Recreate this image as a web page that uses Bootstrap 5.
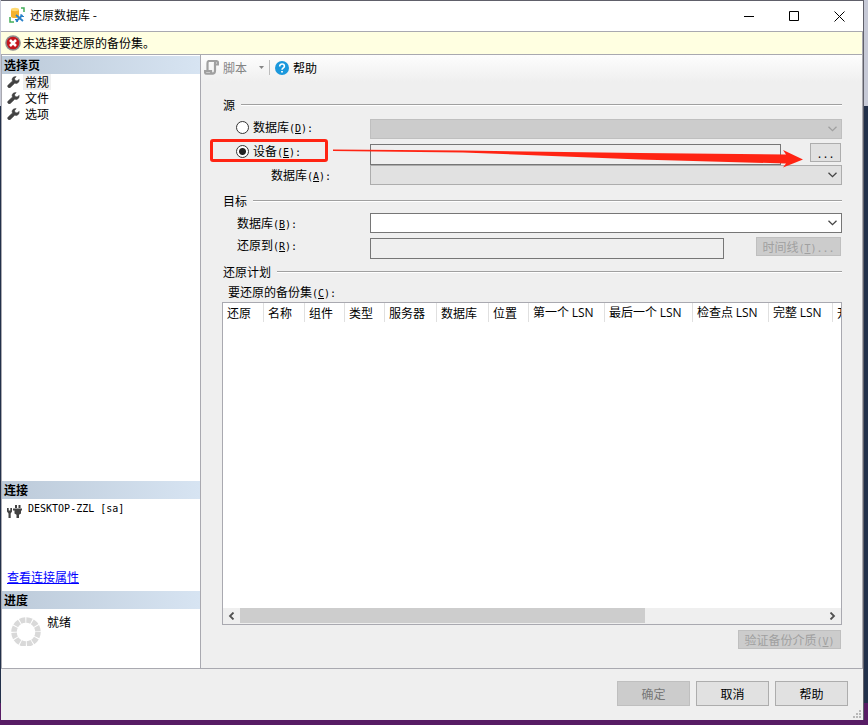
<!DOCTYPE html>
<html lang="zh-CN">
<head>
<meta charset="utf-8">
<meta name="viewport" content="width=device-width, initial-scale=1">
<title>还原数据库</title>
<link href="https://cdn.jsdelivr.net/npm/bootstrap@5.3.0/dist/css/bootstrap.min.css" rel="stylesheet">
<style>
  body { font: 12px/16px "Noto Sans CJK SC", sans-serif; color: #000; background: linear-gradient(#c6c9d6 0 106px, #22304a 106px calc(100% - 22px), #571c64 calc(100% - 22px)); min-height: 100vh; padding: 0 4px 5px 1px; }
  .ascii { font-family: "DejaVu Sans Mono", monospace; font-size: 10px; line-height: 10px; }
  .lsn { font-family: "Open Sans", sans-serif; }
  .window { background: #efefef; border-top: 1px solid #60606a; border-right: 1px solid #60606a; }
  .titlebar { height: 30px; padding: 0 1px 2px 8px; gap: 5px; }
  .caption-btn { width: 45px; height: 28px; border: 0; background: none; padding: 0; }
  .notice { height: 24px; background: #ffffe1; border: 1px solid #a9a9b0; border-left: 0; padding-left: 4px; gap: 2px; }
  .content-area { border-right: 1px solid #a9a9b0; border-bottom: 1px solid #a9a9b0; }
  .side { width: 200px; border: solid #a9a9b0; border-width: 0 1px; }
  .side-title { font-size: 12px; line-height: 18px; font-weight: 700; margin: 0; padding-left: 2px; background: linear-gradient(90deg, #bccad9, #d7e4f2); }
  .page-link-row { color: #000; gap: 3px; padding-left: 5px; height: 16px; }
  .page-link-row span { padding: 0 2px; }
  .page-link-row.current span { background: #efefef; }
  .conn { height: 92px; padding: 2px 5px 6px; }
  .server { gap: 6px; }
  .server .ascii { line-height: 16px; }
  .props { color: #00f; }
  .progress-area { height: 59px; padding: 5px 8px; gap: 5px; }
  .tools { height: 27px; background: linear-gradient(#fdfdfd, #efefef); padding: 0 0 2px 3px; }
  .tool { border: 0; background: none; padding: 0; gap: 4px; }
  .tool:disabled { color: #838383; }
  .divider { width: 1px; height: 15px; background: #bdbdbd; margin: 0 5px; }
  .form-area { padding: 15px 20px 19px 22px; }
  .group-title { font-size: 12px; line-height: 16px; font-weight: 400; margin: 0; gap: 6px; }
  .group-title::after { content: ""; flex: 1; height: 2px; background: #a0a0a0; border-bottom: 1px solid #fff; }
  .plan-title { margin-top: 5px; }
  .field { display: grid; grid-template-columns: 147px minmax(0, 1fr); min-height: 20px; }
  .field.tall { min-height: 22px; }
  .field.first { margin: 6px 0 4px; }
  .indent { padding-left: 14px; }
  .indent-radio { padding-left: 13px; gap: 4px; }
  .indent-deep { padding-left: 48px; }
  .radio { appearance: none; width: 13px; height: 13px; margin: 0; border: 1px solid #333; border-radius: 50%; background: #fff; }
  .radio:checked { background: radial-gradient(circle, #222 0 3px, #fff 4px); }
  .combo { background-image: url("data:image/svg+xml,%3csvg xmlns='http://www.w3.org/2000/svg' viewBox='0 0 9 6'%3e%3cpath fill='none' stroke='%23444' stroke-width='1.3' d='m.5.7 4 4 4-4'/%3e%3c/svg%3e"); background-size: 9px 6px; background-position: right 4px center; height: 20px; padding: 0 16px 0 3px; border: 1px solid #767676; border-radius: 0; font-size: 12px; line-height: 16px; background-color: #fff; }
  .combo.soft { background-color: #e1e1e1; border-color: #adadad; }
  .combo:disabled { background-color: #ccc; border-color: #bfbfbf; background-image: url("data:image/svg+xml,%3csvg xmlns='http://www.w3.org/2000/svg' viewBox='0 0 9 6'%3e%3cpath fill='none' stroke='%23a0a0a0' stroke-width='1.3' d='m.5.7 4 4 4-4'/%3e%3c/svg%3e"); }
  .box { height: 21px; border: 1px solid #767676; border-radius: 0; padding: 0 3px; background: #efefef; font-size: 12px; min-width: 0; }
  .push { padding: 0; border: 1px solid #adadad; border-radius: 0; background: #e1e1e1; font-size: 12px; line-height: 16px; color: #000; height: 19px; margin-right: 1px; flex: none; }
  .push:disabled { background: #ccc; border-color: #bfbfbf; color: #a0a0a0; opacity: 1; }
  .browse { width: 31px; margin-left: 29px; }
  .timeline { width: 85px; margin-left: 32px; }
  .verify { width: 103px; margin-top: 5px; }
  .sets-label { margin-top: 4px; padding-left: 5px; height: 16px; }
  .grid-box { background: #fff; border: 1px solid #a9a9b0; margin: 2px 0 0 -1px; min-height: 80px; }
  .sets { table-layout: fixed; width: 720px; border-collapse: separate; border-spacing: 0; }
  .sets th { font-weight: 400; height: 18px; line-height: 18px; padding: 0 4px; border-right: 1px solid #e0e0e0; white-space: nowrap; }
  .hscroll { height: 16px; background: #efefef; }
  .hscroll button { width: 17px; height: 16px; border: 0; padding: 0; background: none; }
  .thumb { width: 69.3%; height: 15px; background: #cdcdcd; }
  .actions { height: 51px; padding: 0 15px 2px 0; gap: 6px; }
  .actions .push { width: 73px; height: 25px; margin: 0; }
  .actions .push:disabled { color: #777; }
  .callout-box { left: -13px; top: -4px; width: 118px; height: 23px; border: 3px solid #ff2413; border-radius: 3px; pointer-events: none; }
  .callout-arrow { left: 110px; top: 4px; width: calc(100% - 149px); height: 22px; pointer-events: none; }
  .grip { right: 1px; bottom: 1px; }
</style>
<script src="https://cdn.jsdelivr.net/npm/bootstrap@5.3.0/dist/js/bootstrap.bundle.min.js"></script>
</head>
<body class="d-flex flex-column">
<svg class="d-none" aria-hidden="true">
  <symbol id="wrench" viewBox="0 0 12 12"><path fill="#424242" stroke="#424242" stroke-width=".6" stroke-linejoin="round" d="M8.600.6 6 1 4.500 3l.5 2L.7 9a1.600 1.600 0 0 0 2.300 2.300L7.200 7.200l2.200.2 1.900-1.500.4-2.500-2.100 1.500-2.100-.4-.4-2z"/></symbol>
</svg>
<div class="window d-flex flex-column flex-grow-1 position-relative">
  <header class="titlebar d-flex align-items-center bg-white">
    <svg width="16" height="16" viewBox="0 0 16 16" aria-hidden="true">
      <path d="M2 2.500v7c0 2 8 2 8 0v-7z" fill="#f3b32c"/><ellipse cx="6" cy="2.500" rx="4" ry="1.700" fill="#ffda72"/>
      <path d="M12 1h3v4M1 10v5h4" fill="none" stroke="#43ad58" stroke-width="1.500"/>
      <path d="m7 8 7 6M13.500 8 7 14.500" stroke="#2b82c9" stroke-width="1.800"/><path d="M12 7v2.500h3M6 12.500h2.500V15" fill="none" stroke="#2b82c9"/>
    </svg>
    <span class="flex-grow-1">还原数据库 -</span>
    <div class="d-flex">
      <button class="caption-btn" aria-label="最小化"><svg width="11" height="11"><path d="M0 5.500h10" stroke="#000"/></svg></button>
      <button class="caption-btn" aria-label="最大化"><svg width="11" height="11"><path d="M.5.5h9v9h-9z" fill="none" stroke="#000"/></svg></button>
      <button class="caption-btn" aria-label="关闭"><svg width="11" height="11"><path d="m.5.5 10 10m0-10-10 10" stroke="#000"/></svg></button>
    </div>
  </header>
  <div class="notice d-flex align-items-center" role="alert">
    <svg width="16" height="16" viewBox="0 0 16 16" aria-hidden="true"><circle cx="8" cy="8" r="7.800" fill="#8d8d8d"/><circle cx="8" cy="8" r="6.300" fill="#c4161c"/><path d="m5 5 6 6m0-6-6 6" stroke="#fff" stroke-width="2.500"/></svg>
    <span>未选择要还原的备份集。</span>
  </div>
  <div class="content-area d-flex flex-grow-1">
    <aside class="side d-flex flex-column flex-shrink-0 bg-white">
      <h2 class="side-title border-top border-white">选择页</h2>
      <nav class="flex-grow-1" aria-label="选择页">
        <a href="#general" class="page-link-row current d-flex align-items-center text-decoration-none"><svg width="13" height="12"><use href="#wrench"/></svg><span>常规</span></a>
        <a href="#files" class="page-link-row d-flex align-items-center text-decoration-none"><svg width="13" height="12"><use href="#wrench"/></svg><span>文件</span></a>
        <a href="#options" class="page-link-row d-flex align-items-center text-decoration-none"><svg width="13" height="12"><use href="#wrench"/></svg><span>选项</span></a>
      </nav>
      <h2 class="side-title">连接</h2>
      <div class="conn d-flex flex-column justify-content-between">
        <div class="server d-flex">
          <svg class="mt-1" width="15" height="14" viewBox="0 0 15 14" aria-hidden="true"><path fill="#424242" d="M0 3h1.700v2.500h1.600V3H5v3.500L3.700 8.500V13H1.500V8.500L0 6.500zM8 0h2v3H8zM11.500 0h2v3h-2zM6 3.500h9v2h-1V8.500l-2 1.300V13H9.500V9.800l-2-1.300V5.500H6z"/></svg>
          <span class="ascii">DESKTOP-ZZL [sa]</span>
        </div>
        <a href="#properties" class="props align-self-start">查看连接属性</a>
      </div>
      <h2 class="side-title">进度</h2>
      <div class="progress-area d-flex">
        <svg width="32" height="32" viewBox="0 0 32 32" aria-hidden="true"><circle cx="16" cy="18" r="12" fill="none" stroke="#d9d9d9" stroke-width="5.500" stroke-dasharray="5.280 1"/></svg>
        <span>就绪</span>
      </div>
    </aside>
    <main class="flex-grow-1 d-flex flex-column overflow-hidden">
      <div class="tools d-flex align-items-center">
        <button class="tool d-flex align-items-center" disabled>
          <svg width="15" height="15" viewBox="0 0 15 15" aria-hidden="true"><path d="M12 4.500h2V3c0-2.500-3-2.500-3 0v7.500c0 4-4 4-4 .5H1v1c0 1 .7 1.700 1.800 1.700h6.500M3.500 10.500V3c0-1.500.7-2 1.700-2H13" fill="none" stroke="#a0a0a0" stroke-width="2.200"/></svg>
          <span>脚本</span>
          <svg class="ms-2" width="5" height="3" aria-hidden="true"><path d="M0 0h5L2.500 3z" fill="#858585"/></svg>
        </button>
        <span class="divider"></span>
        <button class="tool d-flex align-items-center">
          <svg width="14" height="14" viewBox="0 0 14 14" aria-hidden="true"><circle cx="7" cy="7" r="7" fill="#1b98dc"/><path d="M4.700 5.400c0-3.200 4.700-3 4.700-.2C9.400 6.800 7 6.900 7 8.800" fill="none" stroke="#fff" stroke-width="1.600"/><path d="M6.100 9.900h1.800v1.700H6.100z" fill="#fff"/></svg>
          <span>帮助</span>
        </button>
      </div>
      <form class="form-area d-flex flex-column flex-grow-1">
        <h3 class="group-title d-flex align-items-center">源</h3>
        <div class="field first">
          <div class="indent-radio d-flex align-items-center align-self-start">
            <input class="radio" type="radio" name="source" id="srcDb"><label for="srcDb">数据库<span class="ascii">(<u>D</u>):</span></label>
          </div>
          <select class="form-select combo" aria-label="源数据库" disabled></select>
        </div>
        <div class="field tall position-relative">
          <div class="indent-radio d-flex align-items-center align-self-start">
            <input class="radio" type="radio" name="source" id="srcDev" checked><label for="srcDev">设备<span class="ascii">(<u>E</u>):</span></label>
          </div>
          <div class="d-flex">
            <input type="text" class="box flex-grow-1 align-self-end" aria-label="设备" readonly>
            <button type="button" class="push browse" aria-label="浏览"><span class="ascii">...</span></button>
          </div>
          <div class="callout-box position-absolute"></div>
          <svg class="callout-arrow position-absolute" viewBox="0 0 470 22" preserveAspectRatio="none" aria-hidden="true"><path fill="#ff2413" d="M0 2.500 130 3.500 307 6 453 7.500 450 3 470 12.500 450 20.500 453 16.500 307 12.500 130 5.500 0 4z"/></svg>
        </div>
        <div class="field">
          <label class="indent-deep align-self-center" for="devDb">数据库<span class="ascii">(<u>A</u>):</span></label>
          <select class="form-select combo soft" id="devDb"></select>
        </div>
        <h3 class="group-title d-flex align-items-center mt-2">目标</h3>
        <div class="field mt-1">
          <label class="indent align-self-center" for="dstDb">数据库<span class="ascii">(<u>B</u>):</span></label>
          <select class="form-select combo" id="dstDb"></select>
        </div>
        <div class="field tall mt-1">
          <label class="indent align-self-start" for="restoreTo">还原到<span class="ascii">(<u>R</u>):</span></label>
          <div class="d-flex">
            <input type="text" class="box flex-grow-1 align-self-end" id="restoreTo" readonly>
            <button type="button" class="push timeline" disabled>时间线<span class="ascii">(<u>T</u>)...</span></button>
          </div>
        </div>
        <h3 class="group-title plan-title d-flex align-items-center">还原计划</h3>
        <div class="sets-label" id="setsLabel">要还原的备份集<span class="ascii">(<u>C</u>):</span></div>
        <div class="grid-box flex-grow-1 d-flex flex-column">
          <div class="flex-grow-1 overflow-hidden">
            <table class="sets" aria-labelledby="setsLabel">
              <colgroup><col width="41"><col width="41"><col width="40"><col width="40"><col width="52"><col width="52"><col width="40"><col width="76"><col width="88"><col width="76"><col width="64"><col></colgroup>
              <thead><tr><th>还原</th><th>名称</th><th>组件</th><th>类型</th><th>服务器</th><th>数据库</th><th>位置</th><th>第一个 <span class="lsn">LSN</span></th><th>最后一个 <span class="lsn">LSN</span></th><th>检查点 <span class="lsn">LSN</span></th><th>完整 <span class="lsn">LSN</span></th><th>开始日期</th></tr></thead>
            </table>
          </div>
          <div class="hscroll d-flex">
            <button type="button" class="d-flex align-items-center justify-content-center" aria-label="向左滚动"><svg width="7" height="8"><path d="M5.500.5 2 4l3.500 3.500" fill="none" stroke="#505050" stroke-width="1.800"/></svg></button>
            <div class="flex-grow-1"><div class="thumb"></div></div>
            <button type="button" class="d-flex align-items-center justify-content-center" aria-label="向右滚动"><svg width="7" height="8"><path d="M1.500.5 5 4 1.500 7.500" fill="none" stroke="#505050" stroke-width="1.800"/></svg></button>
          </div>
        </div>
        <button type="button" class="push verify align-self-end" disabled>验证备份介质<span class="ascii">(<u>V</u>)</span></button>
      </form>
    </main>
  </div>
  <footer class="actions d-flex align-items-center justify-content-end">
    <button type="button" class="push" disabled>确定</button>
    <button type="button" class="push">取消</button>
    <button type="button" class="push">帮助</button>
  </footer>
  <svg class="grip position-absolute" width="9" height="9" aria-hidden="true"><path fill="#b8b8b8" d="M6 0h2v2H6zM3 3h2v2H3zM6 3h2v2H6zM0 6h2v2H0zM3 6h2v2H3zM6 6h2v2H6z"/></svg>
</div>
</body>
</html>
